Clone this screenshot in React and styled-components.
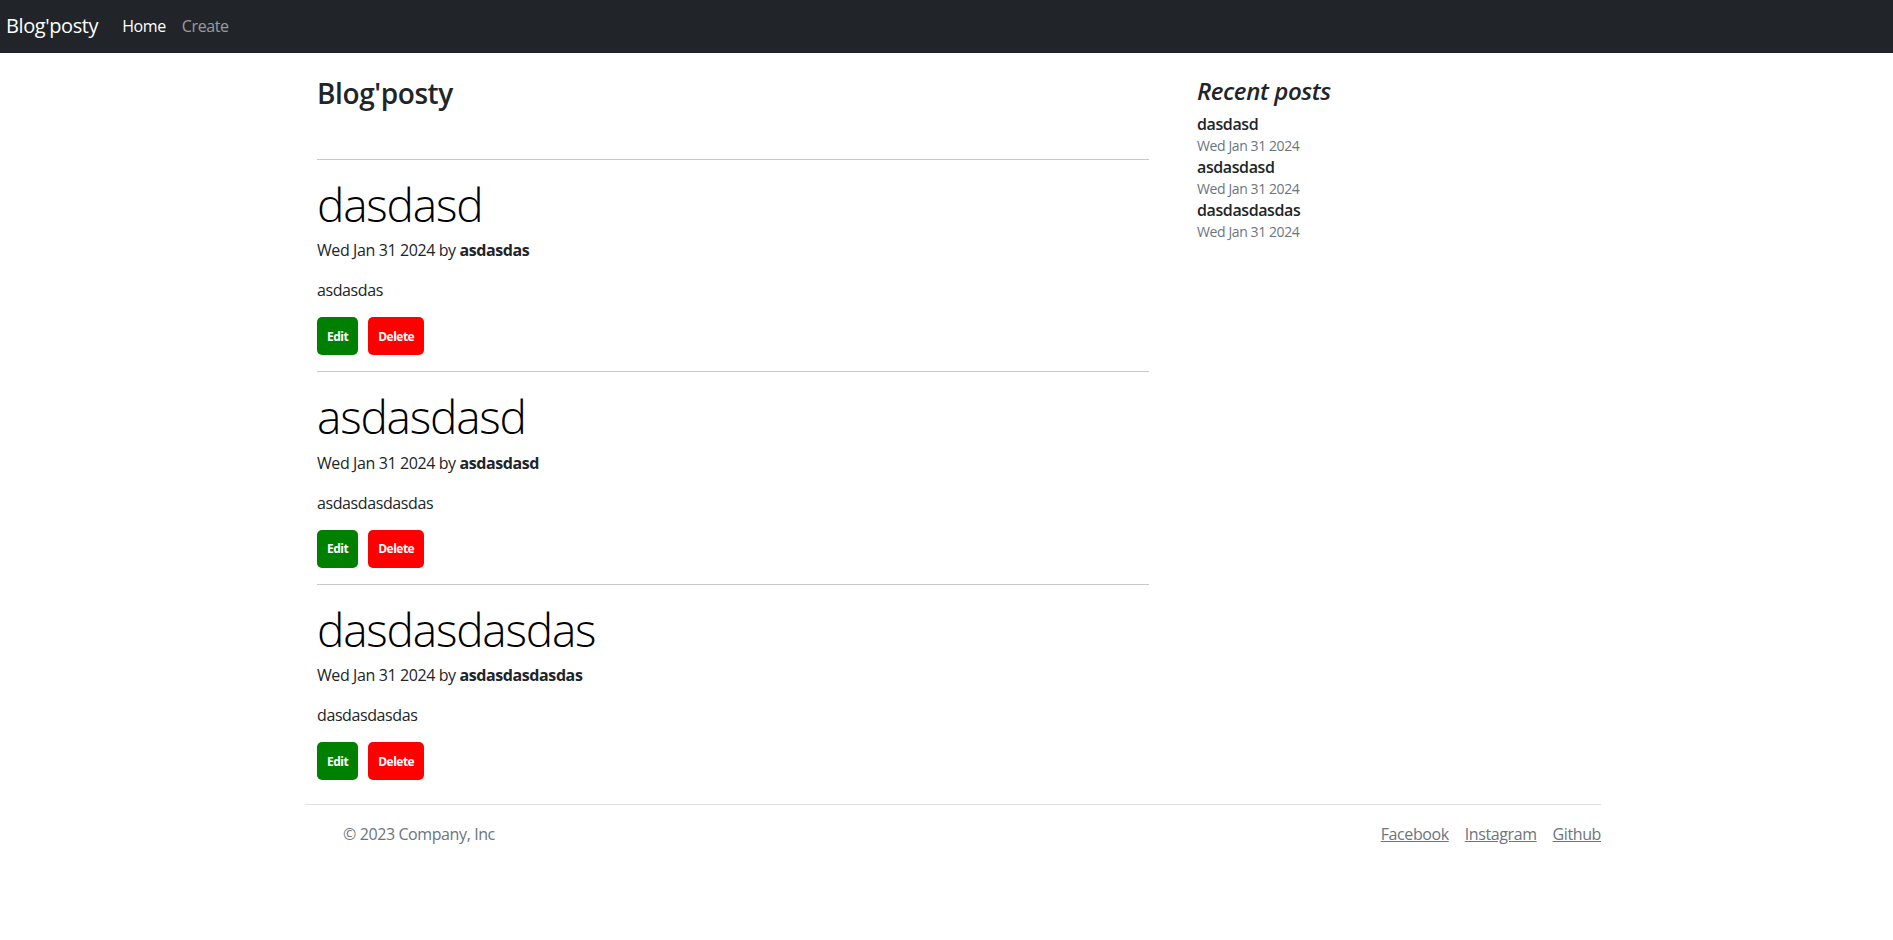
import React from "react";
import styled, { createGlobalStyle } from "styled-components";

const GlobalStyle = createGlobalStyle`
  body {
    margin: 0;
    font-family: "Segoe UI", "Open Sans", "Noto Sans", sans-serif;
    font-size: 16px;
    line-height: 1.5;
    letter-spacing: -0.4px;
    color: #212529;
    background: #fff;
  }
`;

const Navbar = styled.nav`
  height: 53px;
  background: #212529;
  display: flex;
  align-items: center;
  padding: 0 0 2px 6px;
  box-sizing: border-box;
`;
const Brand = styled.a`
  font-size: 20px;
  line-height: 30px;
  color: #fff;
  text-decoration: none;
  margin-right: 16px;
`;
const NavLink = styled.a`
  font-size: 16px;
  line-height: 24px;
  padding: 0 8px;
  text-decoration: none;
  color: ${(p) => (p.active ? "#fff" : "rgba(255, 255, 255, 0.55)")};
`;

const Container = styled.div`
  width: 1320px;
  box-sizing: border-box;
  padding: 0 12px;
  margin-left: calc((100% - 1307px) / 2);
`;
const Main = styled.main`
  display: grid;
  grid-template-columns: 832px 392px;
  column-gap: 48px;
  padding: 24px 12px 0;
`;
const Heading = styled.h3`
  margin: 0 0 48px;
  font-size: 28px;
  font-weight: 600;
  line-height: 1.2;
`;
const Divider = styled.hr`
  margin: 0;
  border: 0;
  border-top: 1px solid #c8c9ca;
`;
const Post = styled.article`
  padding-top: 16px;
  padding-bottom: ${(p) => (p.last ? "0" : "16px")};
`;
const PostTitle = styled.h2`
  margin: 0;
  font-size: 46px;
  font-weight: 300;
  line-height: 57.6px;
  letter-spacing: -1.2px;
  color: #000;
`;
const Meta = styled.p`
  margin: 5px 0 16px;
  b {
    font-weight: 700;
  }
`;
const Body = styled.p`
  margin: 0 0 15px;
`;
const Actions = styled.div`
  display: flex;
  gap: 10px;
`;
const ActionButton = styled.button`
  height: 38px;
  padding: 0 10px;
  border: none;
  border-radius: 5px;
  background: ${(p) => p.bg};
  color: #fff;
  font-family: inherit;
  font-size: 12px;
  font-weight: 700;
  letter-spacing: -0.5px;
  cursor: pointer;
`;

const Sidebar = styled.aside`
  display: flex;
  flex-direction: column;
`;
const SideHeading = styled.h4`
  margin: 0 0 7px;
  font-size: 24px;
  font-style: italic;
  font-weight: 600;
  line-height: 1.2;
`;
const RecentTitle = styled.a`
  font-size: 16px;
  font-weight: 600;
  line-height: 22px;
  color: #212529;
  text-decoration: none;
`;
const RecentDate = styled.small`
  font-size: 14px;
  line-height: 21px;
  color: #6c757d;
`;

const Footer = styled.footer`
  display: flex;
  justify-content: space-between;
  align-items: center;
  margin: 24px 0;
  padding: 17px 0 16px;
  border-top: 1px solid #dee2e6;
  color: #6c757d;
`;
const Copy = styled.span`
  padding-left: 38px;
`;
const Links = styled.div`
  display: flex;
  gap: 16px;
  a {
    color: #6c757d;
  }
`;

const posts = [
  { title: "dasdasd", author: "asdasdas", body: "asdasdas" },
  { title: "asdasdasd", author: "asdasdasd", body: "asdasdasdasdas" },
  { title: "dasdasdasdas", author: "asdasdasdasdas", body: "dasdasdasdas" },
];
const date = "Wed Jan 31 2024";

export default function App() {
  return (
    <>
      <GlobalStyle />
      <Navbar>
        <Brand href="#">Blog'posty</Brand>
        <NavLink href="#" active>
          Home
        </NavLink>
        <NavLink href="#">Create</NavLink>
      </Navbar>
      <Container>
        <Main>
          <div>
            <Heading>Blog'posty</Heading>
            {posts.map((p, i) => (
              <React.Fragment key={p.title}>
                <Divider />
                <Post last={i === posts.length - 1}>
                  <PostTitle>{p.title}</PostTitle>
                  <Meta>
                    {date} by <b>{p.author}</b>
                  </Meta>
                  <Body>{p.body}</Body>
                  <Actions>
                    <ActionButton bg="#008000">Edit</ActionButton>
                    <ActionButton bg="#ff0000">Delete</ActionButton>
                  </Actions>
                </Post>
              </React.Fragment>
            ))}
          </div>
          <Sidebar>
            <SideHeading>Recent posts</SideHeading>
            {posts.map((p) => (
              <React.Fragment key={p.title}>
                <RecentTitle href="#">{p.title}</RecentTitle>
                <RecentDate>{date}</RecentDate>
              </React.Fragment>
            ))}
          </Sidebar>
        </Main>
        <Footer>
          <Copy>© 2023 Company, Inc</Copy>
          <Links>
            <a href="#">Facebook</a>
            <a href="#">Instagram</a>
            <a href="#">Github</a>
          </Links>
        </Footer>
      </Container>
    </>
  );
}
